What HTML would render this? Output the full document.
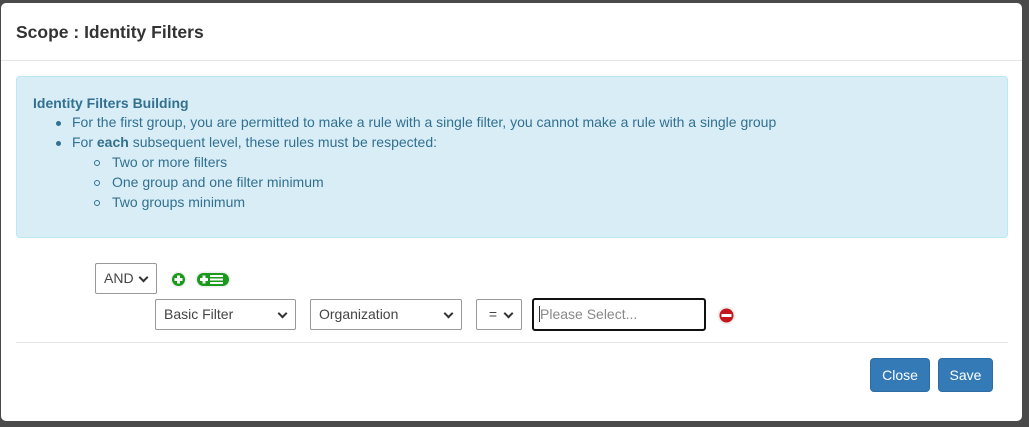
<!DOCTYPE html>
<html><head><style>
*{box-sizing:border-box;margin:0;padding:0}
body{width:1029px;height:427px;background:#4a4a4a;font-family:"Liberation Sans",sans-serif;position:relative;overflow:hidden;color:#333}
.modal{position:absolute;left:1px;top:3px;width:1021px;height:418px;background:#fff;border-radius:5px}
.title{position:absolute;left:15px;top:19px;font-size:17.5px;font-weight:bold;color:#333}
.hr1{position:absolute;left:0;top:57px;width:1021px;height:1px;background:#e5e5e5}
.alert{position:absolute;left:15px;top:73px;width:992px;height:162px;background:#d9edf7;border:1px solid #bce8f1;border-radius:4px;color:#31708f;font-size:14px}
.alert b.h{position:absolute;left:16px;top:18px}
.alert .l{position:absolute;white-space:nowrap}
.dot{position:absolute;width:5px;height:5px;border-radius:50%;background:#31708f}
.circ{position:absolute;width:6px;height:6px;border-radius:50%;border:1px solid #31708f}
.sel{position:absolute;border:1px solid #999;border-radius:2px;background:#fff;font-size:14px;color:#444;padding-left:8px;line-height:29px}
.sel:after{content:"";position:absolute;right:9px;top:10px;width:5px;height:5px;border-right:2px solid #333;border-bottom:2px solid #333;transform:rotate(45deg)}
.hr2{position:absolute;left:15px;top:339px;width:992px;height:1px;background:#e5e5e5}
.btn{position:absolute;top:355px;height:34px;background:#337ab7;border:1px solid #2e6da4;border-radius:4px;color:#fff;font-size:14px;text-align:center;line-height:32px}
</style></head><body>
<div class="modal">
<div class="title">Scope : Identity Filters</div>
<div class="hr1"></div>
<div class="alert">
<b class="h">Identity Filters Building</b>
<span class="dot" style="left:39px;top:44px"></span><span class="l" style="left:55px;top:37px">For the first group, you are permitted to make a rule with a single filter, you cannot make a rule with a single group</span>
<span class="dot" style="left:39px;top:64px"></span><span class="l" style="left:55px;top:57px">For <b>each</b> subsequent level, these rules must be respected:</span>
<span class="circ" style="left:77px;top:83px"></span><span class="l" style="left:95px;top:77px">Two or more filters</span>
<span class="circ" style="left:77px;top:103px"></span><span class="l" style="left:95px;top:97px">One group and one filter minimum</span>
<span class="circ" style="left:77px;top:123px"></span><span class="l" style="left:95px;top:117px">Two groups minimum</span>
</div>
<div class="sel" style="left:94px;top:260px;width:62px;height:31px">AND</div>
<svg style="position:absolute;left:169px;top:268px" width="17" height="17"><circle cx="8.5" cy="8.5" r="8" fill="#eee"/><circle cx="8.5" cy="8.5" r="6.5" fill="#1a9a1a"/><rect x="4.5" y="7" width="8" height="3" fill="#fff"/><rect x="7" y="4.5" width="3" height="8" fill="#fff"/></svg>
<svg style="position:absolute;left:194px;top:268px" width="36" height="17"><rect x="0.5" y="0.5" width="35" height="16" rx="8" fill="#eee"/><rect x="2" y="2" width="32" height="13" rx="6.5" fill="#1a9a1a"/><rect x="5" y="7" width="8" height="3" fill="#fff"/><rect x="7.5" y="4.5" width="3" height="8" fill="#fff"/><rect x="15" y="4" width="13" height="2" fill="#fff"/><rect x="15" y="7.5" width="13" height="2" fill="#fff"/><rect x="15" y="11" width="13" height="2" fill="#fff"/></svg>
<div class="sel" style="left:154px;top:296px;width:141px;height:31px">Basic Filter</div>
<div class="sel" style="left:309px;top:296px;width:152px;height:31px">Organization</div>
<div class="sel" style="left:475px;top:296px;width:46px;height:31px">&nbsp;=</div>
<div style="position:absolute;left:531px;top:295px;width:174px;height:33px;border:2px solid #111;border-radius:3px;font-size:14px;color:#888;line-height:29px;padding-left:5px"><span style="border-left:1px solid #333">Please Select...</span></div>
<svg style="position:absolute;left:716px;top:303px" width="19" height="19"><circle cx="9.5" cy="9.5" r="9" fill="#eee"/><circle cx="9.5" cy="9.5" r="7" fill="#c4161c"/><rect x="4.5" y="8" width="10" height="3" fill="#fff"/></svg>
<div class="hr2"></div>
<div class="btn" style="left:869px;width:60px">Close</div>
<div class="btn" style="left:937px;width:55px">Save</div>
</div>
</body></html>
